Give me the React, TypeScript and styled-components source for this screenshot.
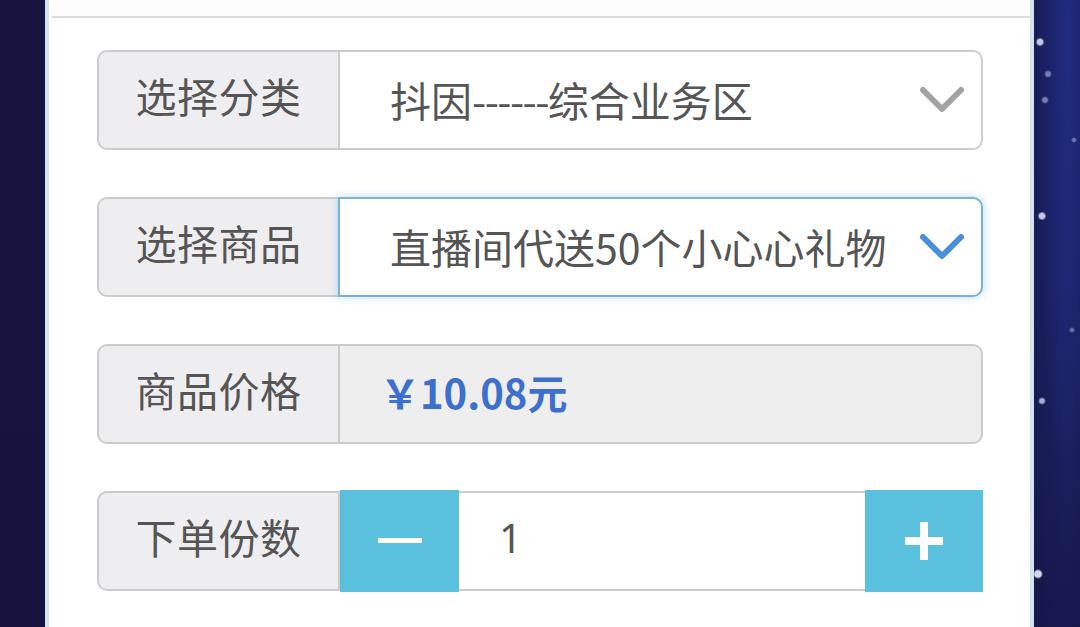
import React from "react";
import styled, { createGlobalStyle } from "styled-components";

const GlobalStyle = createGlobalStyle`
  html, body { margin: 0; padding: 0; background: #16133e; }
  body { font-family: "Noto Sans CJK SC", "Noto Sans", sans-serif; }
  * { box-sizing: border-box; }
`;

const Page = styled.div`
  display: flex;
  width: 1080px;
  height: 627px;
  overflow: hidden;
`;

const LeftSpace = styled.div`
  width: 45px;
  flex: none;
  background: linear-gradient(180deg, #17133f 0%, #15123d 100%);
`;

const RightSpace = styled.div`
  width: 46px;
  flex: none;
  background:
    radial-gradient(circle at 6px 42px, rgba(230,230,255,0.85) 0 2.5px, transparent 4.5px),
    radial-gradient(circle at 14px 74px, rgba(200,200,240,0.55) 0 2px, transparent 4px),
    radial-gradient(circle at 11px 100px, rgba(200,200,240,0.55) 0 2px, transparent 4px),
    radial-gradient(circle at 8px 216px, rgba(230,230,255,0.85) 0 2.5px, transparent 4.5px),
    radial-gradient(circle at 40px 140px, rgba(200,200,240,0.45) 0 1.5px, transparent 3px),
    radial-gradient(circle at 8px 401px, rgba(220,220,255,0.75) 0 2px, transparent 4px),
    radial-gradient(circle at 38px 330px, rgba(200,200,240,0.45) 0 1.5px, transparent 3px),
    radial-gradient(circle at 4px 574px, rgba(235,235,255,0.9) 0 3px, transparent 5px),
    radial-gradient(ellipse at 34px 34px, rgba(40,60,170,0.45) 0, transparent 30px),
    radial-gradient(ellipse at 30px 300px, rgba(40,60,160,0.25) 0, transparent 60px),
    linear-gradient(180deg, #171a52 0%, #16184c 50%, #141442 100%);
`;

const Panel = styled.div`
  flex: 1;
  display: flex;
  flex-direction: column;
  background: #ffffff;
  border-left: 4px solid #d3e4ee;
  border-right: 4px solid #d3e4ee;
`;

const TopCard = styled.div`
  height: 18px;
  flex: none;
  background: #fdfdfd;
  border-bottom: 2px solid #dddddd;
  margin-left: 3px;
`;

const Form = styled.div`
  display: flex;
  flex-direction: column;
  gap: 47px;
  padding: 32px 47px 0 48px;
`;

const Row = styled.div`
  display: flex;
  height: 100px;
`;

const Label = styled.div`
  width: 243px;
  flex: none;
  display: flex;
  align-items: center;
  justify-content: center;
  background: #eeeef0;
  border: 2px solid #cccccc;
  border-radius: 10px 0 0 10px;
  padding-bottom: 10px;
  font-size: 41px;
  color: #555555;
  letter-spacing: 0.5px;
`;

const Select = styled.div<{ $focused?: boolean }>`
  flex: 1;
  min-width: 0;
  position: relative;
  display: flex;
  align-items: center;
  background: #ffffff;
  border: 2px solid ${(p) => (p.$focused ? "#78b2d6" : "#cccccc")};
  border-left: ${(p) => (p.$focused ? "2px solid #78b2d6" : "none")};
  margin-left: ${(p) => (p.$focused ? "-2px" : "0")};
  border-radius: 0 10px 10px 0;
  box-shadow: ${(p) =>
    p.$focused ? "0 0 10px rgba(102, 175, 233, 0.45)" : "none"};
  padding: 0 80px 0 50px;
`;

const SelectText = styled.div`
  font-size: 41px;
  color: #555555;
  white-space: nowrap;
  line-height: 1.4;
`;

const Dashes = styled.span`
  letter-spacing: -1.6px;
`;

const Chevron = styled.svg`
  position: absolute;
  right: 16px;
  top: 50%;
  transform: translateY(-50%);
`;

const PriceBox = styled.div`
  flex: 1;
  display: flex;
  align-items: center;
  background: #eeeeee;
  border: 2px solid #cccccc;
  border-left: none;
  border-radius: 0 10px 10px 0;
  padding: 0 0 4px 40px;
`;

const Price = styled.span`
  font-family: "Noto Sans CJK SC", "Noto Sans", sans-serif;
  font-weight: 700;
  font-size: 40px;
  color: #3d6fcf;
`;

const StepButton = styled.div<{ $wide: number }>`
  width: ${(p) => p.$wide}px;
  flex: none;
  display: flex;
  align-items: center;
  justify-content: center;
  background: #5bc0de;
  margin: -1px 0;
`;

const QtyInput = styled.div`
  flex: 1;
  display: flex;
  align-items: center;
  background: #ffffff;
  border-top: 2px solid #cccccc;
  border-bottom: 2px solid #cccccc;
  padding: 0 0 8px 40px;
  font-family: "Noto Sans", sans-serif;
  font-size: 40px;
  color: #555555;
`;

const ChevronIcon = ({ color }: { color: string }) => (
  <Chevron width="46" height="30" viewBox="0 0 46 30">
    <polyline
      points="4,5 23,24 42,5"
      fill="none"
      stroke={color}
      strokeWidth="6"
      strokeLinecap="round"
      strokeLinejoin="round"
    />
  </Chevron>
);

export default function App() {
  return (
    <>
      <GlobalStyle />
      <Page>
        <LeftSpace />
        <Panel>
          <TopCard />
          <Form>
            <Row>
              <Label>选择分类</Label>
              <Select>
                <SelectText>
                  抖因<Dashes>------</Dashes>综合业务区
                </SelectText>
                <ChevronIcon color="#a3a3a3" />
              </Select>
            </Row>
            <Row>
              <Label>选择商品</Label>
              <Select $focused>
                <SelectText>直播间代送50个小心心礼物</SelectText>
                <ChevronIcon color="#4a8fdc" />
              </Select>
            </Row>
            <Row>
              <Label>商品价格</Label>
              <PriceBox>
                <Price>￥10.08元</Price>
              </PriceBox>
            </Row>
            <Row>
              <Label>下单份数</Label>
              <StepButton $wide={119}>
                <svg width="44" height="6" viewBox="0 0 44 6">
                  <rect x="0" y="0" width="44" height="5" fill="#ffffff" />
                </svg>
              </StepButton>
              <QtyInput>1</QtyInput>
              <StepButton $wide={118}>
                <svg width="38" height="38" viewBox="0 0 38 38">
                  <rect x="15" y="0" width="8" height="38" fill="#ffffff" />
                  <rect x="0" y="15" width="38" height="8" fill="#ffffff" />
                </svg>
              </StepButton>
            </Row>
          </Form>
        </Panel>
        <RightSpace />
      </Page>
    </>
  );
}
